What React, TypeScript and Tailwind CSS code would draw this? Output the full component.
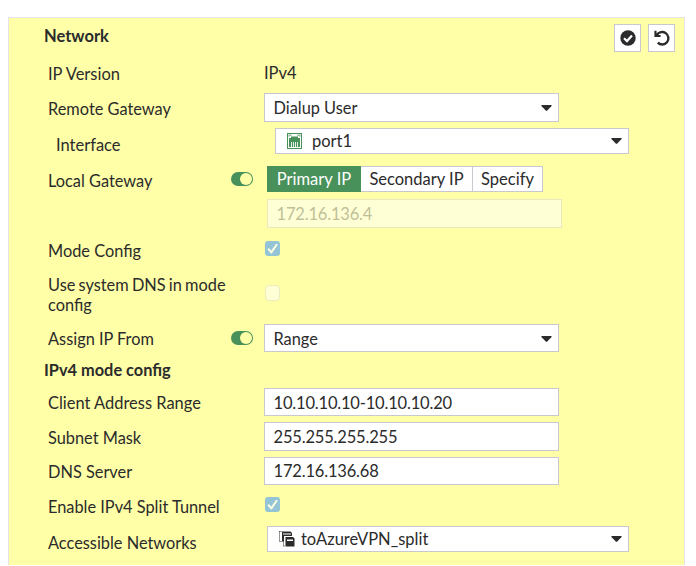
import type { ReactNode } from "react";

const Caret = () => (
  <svg className="mr-[6px] h-[6px] w-[11px] shrink-0" viewBox="0 0 11 6" fill="#2b2b2b">
    <path d="M0.3 0H10.7L10.3 1.2L6.3 5.4Q5.5 6 4.7 5.4L0.7 1.2Z" />
  </svg>
);

const Toggle = () => (
  <span className="flex h-[14px] w-[22px] items-center justify-end rounded-full bg-[#49915a] pr-[1px]">
    <span className="h-3 w-3 rounded-full bg-[#ffffa8]" />
  </span>
);

const Check = ({ checked }: { checked?: boolean }) =>
  checked ? (
    <span className="flex h-[15px] w-[15px] items-center justify-center rounded-[3px] bg-[#94c5d6]">
      <svg className="h-[15px] w-[15px]" viewBox="0 0 15 15" fill="none" stroke="#ffffe6" strokeWidth="2" strokeLinecap="round" strokeLinejoin="round">
        <path d="M3.6 8.2L6.3 11.4L11.6 3.7" />
      </svg>
    </span>
  ) : (
    <span className="block h-4 w-[15px] rounded-[4px] border border-[#ecebc0] bg-[#ffffd6]" />
  );

const PortIcon = () => (
  <svg className="h-4 w-[15px] shrink-0" viewBox="0 0 15 16">
    <rect x="0.5" y="0.5" width="14" height="15" fill="#fff" stroke="#49915a" />
    <path d="M1.5 1.5H4.5V3H2.5V4H1.5ZM10.5 1.5H13.5V4H12.5V3H10.5Z" fill="#8fbd9a" />
    <path d="M2 5H4V3.5H11V5H13V14H2Z" fill="#49915a" />
    <path d="M4.5 9V14M6.5 9V14M8.5 9V14M10.5 9V14" stroke="#e6f1e8" strokeWidth="1" />
  </svg>
);

const GroupIcon = () => (
  <svg className="h-4 w-4 shrink-0" viewBox="0 0 16 16">
    <path d="M3 0.5H11.5L13 2V5H5V10.5H3Z" fill="#2b2b2b" />
    <path d="M4 3H12" stroke="#fff" strokeWidth="1" />
    <path d="M0.5 0.5V10M0.5 10.5H3M0.5 0.5H3" stroke="#2b2b2b" strokeWidth="1" strokeDasharray="1 1" />
    <path d="M4.5 5.5V15.5M4.5 15H6.5" stroke="#2b2b2b" strokeWidth="1" strokeDasharray="1 1" />
    <path d="M6.5 6H14L15.5 7.5V15.5H6.5Z" fill="#2b2b2b" />
    <path d="M8 8.5H14V10H8Z" fill="#fff" />
  </svg>
);

const box = "flex items-center border border-[#c8c8ce] bg-white";
const digits = "pl-[8.5px] text-[16.5px] tracking-[-0.18px]";

function Row({ h, label, labelClass, toggle, children }: {
  h: string;
  label: ReactNode;
  labelClass: string;
  toggle?: string;
  children?: ReactNode;
}) {
  return (
    <div className={`flex items-start ${h}`}>
      <div className={`w-[192px] shrink-0 whitespace-nowrap ${labelClass}`}>{label}</div>
      <div className={`w-[33px] shrink-0 ${toggle ?? ""}`}>{toggle && <Toggle />}</div>
      {children}
    </div>
  );
}

export default function App() {
  return (
    <div className="h-[566px] w-[696px] overflow-hidden bg-white pl-2 pt-[17px] font-['Lato',sans-serif] text-[16.35px] leading-5 text-[#2b2b2b]">
      <div className="h-[548px] w-[677px] border-x border-t border-[#e4e4e8] bg-[#ffffa8] pl-[30px]">
        <div className="flex h-[39px] items-start">
          <h2 className="w-[575px] pl-[5px] pt-2 text-[16.5px] font-bold">Network</h2>
          <button className={`${box} mt-[6px] h-7 w-[27px] justify-center`}>
            <svg className="h-4 w-4" viewBox="0 0 16 16">
              <circle cx="8" cy="8" r="7.7" fill="#2b2b2b" />
              <path d="M4 8.2L7 11.1L12 5.5" fill="none" stroke="#fff" strokeWidth="2.2" />
            </svg>
          </button>
          <button className={`${box} ml-[7px] mt-[6px] h-7 w-[27px] justify-center`}>
            <svg className="h-4 w-4" viewBox="0 0 16 16">
              <path d="M2.8 5.2A6.2 6.2 0 1 1 3.8 12.6" fill="none" stroke="#2b2b2b" strokeWidth="2.4" />
              <path d="M0.4 0.8V7H6.6V4.9H4.2L2.5 3.1V0.8Z" fill="#2b2b2b" />
            </svg>
          </button>
        </div>

        <Row h="h-9" label="IP Version" labelClass="pt-[7px] pl-[9px] text-[16.5px]">
          <span className="pt-[6px] text-[16.5px]">IPv4</span>
        </Row>
        <Row h="h-[35px]" label="Remote Gateway" labelClass="pt-[6px] pl-[9px]">
          <div className={`${box} h-[29px] w-[295px] justify-between pl-[8.5px]`}>Dialup User<Caret /></div>
        </Row>
        <Row h="h-[38px]" label="Interface" labelClass="pt-[7px] pl-[17px] text-[16.5px]">
          <div className={`${box} ml-[11px] h-[26px] w-[354px] pl-[11px]`}>
            <PortIcon />
            <span className="ml-[10px] flex-1 text-[16.5px]">port1</span>
            <Caret />
          </div>
        </Row>
        <Row h="h-[33px]" label="Local Gateway" labelClass="pt-[5px] pl-[9px]" toggle="pt-[6px]">
          <div className="ml-[3px] flex h-[26px] text-[16.5px]">
            <div className="flex w-[94px] items-center justify-center bg-[#49915a] text-white">Primary IP</div>
            <div className={`${box} w-[112px] justify-center border-l-0`}>Secondary IP</div>
            <div className={`${box} w-[70px] justify-center border-l-0`}>Specify</div>
          </div>
        </Row>
        <Row h="h-[42px]" label="" labelClass="">
          <div className={`ml-[3px] flex h-[29px] w-[295px] items-center border border-[#e9e9bd] bg-[#ffffd6] text-[#bfbf98] ${digits}`}>172.16.136.4</div>
        </Row>
        <Row h="h-[34px]" label="Mode Config" labelClass="pl-[9px]">
          <div className="ml-px"><Check checked /></div>
        </Row>
        <Row h="h-[49px]" label={<>Use system DNS in mode<br />config</>} labelClass="pl-[9px] [word-spacing:-1px]">
          <div className="ml-px pt-[10px]"><Check /></div>
        </Row>
        <Row h="h-9" label="Assign IP From" labelClass="pt-[5px] pl-[9px]" toggle="pt-[7px]">
          <div className={`${box} h-7 w-[295px] justify-between pl-[8.5px] pt-px`}>Range<Caret /></div>
        </Row>
        <h2 className="h-7 pl-[5px] font-bold">IPv4 mode config</h2>
        <Row h="h-[34px]" label="Client Address Range" labelClass="pt-[5px] pl-[9px] text-[16.45px]">
          <div className={`${box} h-7 w-[295px] pt-px ${digits}`}>10.10.10.10-10.10.10.20</div>
        </Row>
        <Row h="h-[35px]" label="Subnet Mask" labelClass="pt-[6px] pl-[9px]">
          <div className={`${box} h-[29px] w-[295px] ${digits}`}>255.255.255.255</div>
        </Row>
        <Row h="h-10" label="DNS Server" labelClass="pt-[5px] pl-[9px]">
          <div className={`${box} h-7 w-[295px] ${digits}`}>172.16.136.68</div>
        </Row>
        <Row h="h-[29px]" label="Enable IPv4 Split Tunnel" labelClass="pl-[9px]">
          <div className="ml-px"><Check checked /></div>
        </Row>
        <Row h="h-[30px]" label="Accessible Networks" labelClass="pt-[7px] pl-[9px]">
          <div className={`${box} ml-[3px] h-[26px] w-[362px] pl-[11px]`}>
            <GroupIcon />
            <span className="ml-[6px] flex-1 text-[16.5px]">toAzureVPN_split</span>
            <Caret />
          </div>
        </Row>
      </div>
    </div>
  );
}
